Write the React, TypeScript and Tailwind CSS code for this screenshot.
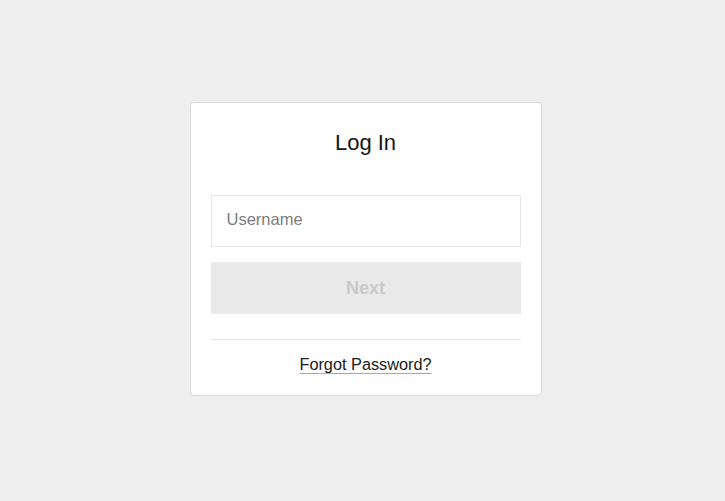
import React from "react";

const App: React.FC = () => {
  return (
    <div
      className="min-h-screen w-full bg-[#eeeeee] flex justify-center pt-[102px] pl-[6px]"
      style={{ fontFamily: '"Liberation Sans", Arial, sans-serif' }}
    >
      <div className="w-[352px] h-[294px] bg-white border border-[#dadada] rounded-[4px] px-[20px] pt-[26px] pb-[20px] flex flex-col">
        {/* Title */}
        <h1 className="text-[22px] leading-[28px] text-center text-[#161616] font-normal">
          Log In
        </h1>

        {/* Username */}
        <input
          type="text"
          placeholder="Username"
          className="mt-[38px] h-[52px] w-full border border-[#e6e6e6] px-[15px] pb-[3px] text-[16.5px] text-[#222] placeholder:text-[#7c7c7c] outline-none"
        />

        {/* Next button */}
        <button
          disabled
          className="mt-[15px] h-[52px] w-full bg-[#e9e9e9] text-[18px] font-bold text-[#c9c9c9]"
        >
          Next
        </button>

        <div className="mt-[25px] h-px w-full bg-[#e6e6e6]" />

        {/* Forgot password */}
        <div className="mt-[14px] text-center leading-[20px]">
          <a
            href="#"
            className="text-[16.3px] text-[#1a1a1a] underline decoration-[#a8a8a8] underline-offset-[3px]"
          >
            Forgot Password?
          </a>
        </div>
      </div>
    </div>
  );
};

export default App;
